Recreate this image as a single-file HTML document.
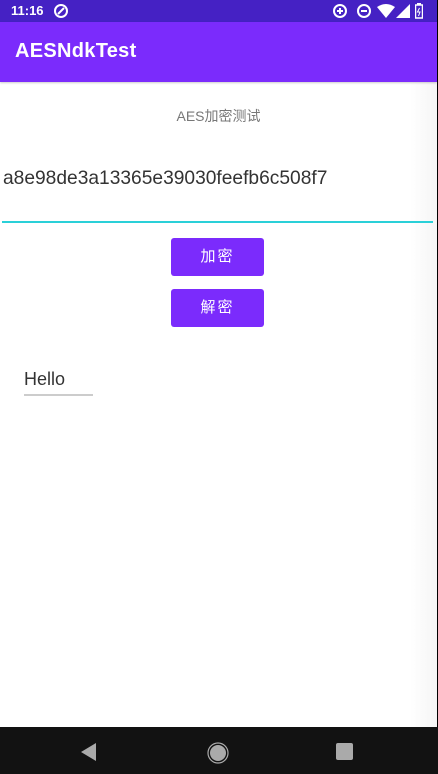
<!DOCTYPE html>
<html><head><meta charset="utf-8"><style>
*{margin:0;padding:0;box-sizing:border-box}
body{width:438px;height:774px;overflow:hidden;background:#000;font-family:"Liberation Sans","Noto Sans CJK SC",sans-serif;position:relative}
.app{position:absolute;left:0;top:0;width:437px;height:727px;background:linear-gradient(to right,#fff 410px,#f5f5f5 437px)}
.sb{position:absolute;left:0;top:0;width:437px;height:22px;background:#4521c4;color:#fff}
.ab{position:absolute;left:0;top:22px;width:437px;height:60px;background:#7b2bfc;box-shadow:0 1px 2px rgba(0,0,0,.2)}
.nav{position:absolute;left:0;top:727px;width:438px;height:47px;background:#121212}
.btn{position:absolute;left:171px;width:93px;height:38px;background:#7b2bfc;border-radius:3px;color:#fff;font-size:15px;text-align:center;line-height:38px;letter-spacing:2px}
</style></head><body>
<div class="app">
<div class="sb">
<div style="position:absolute;left:11px;top:3px;font-size:13px;font-weight:bold">11:16</div>
<svg style="position:absolute;left:53px;top:3px" width="16" height="16"><circle cx="8" cy="8" r="6" fill="none" stroke="#fff" stroke-width="2"/><path d="M5 11 L11 5" stroke="#fff" stroke-width="2"/></svg>
<svg style="position:absolute;left:332px;top:3px" width="16" height="16"><circle cx="8" cy="8" r="6" fill="none" stroke="#fff" stroke-width="2"/><path d="M8 5v6M5 8h6" stroke="#fff" stroke-width="2"/></svg>
<svg style="position:absolute;left:356px;top:3px" width="16" height="16"><circle cx="8" cy="8" r="6" fill="none" stroke="#fff" stroke-width="2"/><path d="M5 8h6" stroke="#fff" stroke-width="2"/></svg>
<svg style="position:absolute;left:377px;top:4px" width="18" height="14"><path d="M0 3 Q9 -3 18 3 L9 14Z" fill="#fff"/></svg>
<svg style="position:absolute;left:396px;top:4px" width="14" height="14"><path d="M14 0V14H0Z" fill="#fff"/></svg>
<svg style="position:absolute;left:415px;top:3px" width="8" height="16"><rect x="0.5" y="2" width="7" height="13" fill="none" stroke="#fff" stroke-width="1.5"/><rect x="2" y="0" width="4" height="2" fill="#fff"/><path d="M4.5 5L2.5 9H5L3.5 13" stroke="#fff" stroke-width="1" fill="none"/></svg>
</div>
<div class="ab"><div style="position:absolute;left:15px;top:18px;color:#fff;font-size:20px;font-weight:600;letter-spacing:.3px">AESNdkTest</div></div>
<div style="position:absolute;left:0;width:437px;top:106px;text-align:center;font-size:14px;color:#777">AES加密测试</div>
<div style="position:absolute;left:3px;top:168px;font-size:19.2px;color:#333">a8e98de3a13365e39030feefb6c508f7</div>
<div style="position:absolute;left:2px;top:221px;width:431px;height:2px;background:#2ad0d8"></div>
<div class="btn" style="top:238px">加密</div>
<div class="btn" style="top:289px">解密</div>
<div style="position:absolute;left:24px;top:369px;font-size:18px;color:#333">Hello</div>
<div style="position:absolute;left:24px;top:394px;width:69px;height:2px;background:#ccc"></div>
</div>
<div class="nav">
<svg style="position:absolute;left:81px;top:16px" width="16" height="18"><path d="M15 0V18L0 9Z" fill="#aaa"/></svg>
<svg style="position:absolute;left:207px;top:15px" width="22" height="22"><circle cx="11" cy="11" r="10" fill="none" stroke="#aaa" stroke-width="1.2"/><circle cx="11" cy="11" r="8" fill="#aaa"/></svg>
<div style="position:absolute;left:336px;top:16px;width:17px;height:17px;background:#aaa;border-radius:2px"></div>
</div>
</body></html>
